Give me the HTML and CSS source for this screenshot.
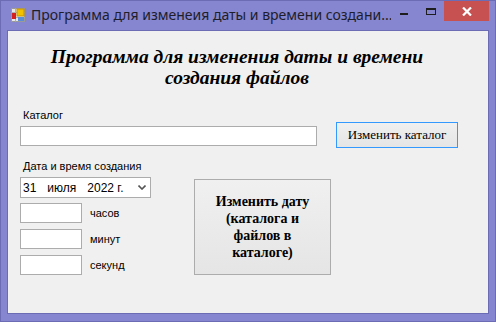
FILE: index.html
```html
<!DOCTYPE html>
<html lang="ru">
<head>
    <meta charset="UTF-8">
    <title>Программа для изменеия даты и времени создания файлов</title>
    <link rel="stylesheet" href="styles.css">
</head>
<body>
    <div class="window">
        <!-- Заголовок окна -->
        <div class="titlebar">
            <svg class="app-icon" viewBox="0 0 14 14">
                <rect x="0.5" y="0.5" width="13" height="13" fill="#e8e8e8" stroke="#9a9a9a"/>
                <line x1="0.5" y1="4.5" x2="13.5" y2="4.5" stroke="#b0b0b0"/>
                <line x1="0.5" y1="9.5" x2="13.5" y2="9.5" stroke="#b0b0b0"/>
                <line x1="4.5" y1="0.5" x2="4.5" y2="13.5" stroke="#b0b0b0"/>
                <rect x="6" y="1" width="7" height="7" fill="#f2c200" stroke="#c89400"/>
                <rect x="1" y="5" width="4" height="6" fill="#d42020"/>
                <rect x="7" y="9" width="6" height="4" fill="#5a8fd8"/>
            </svg>
            <span class="title">Программа для изменеия даты и времени создани...</span>
            <div class="controls">
                <div class="ctl ctl-min">
                    <svg viewBox="0 0 26 20">
                        <rect x="9" y="12" width="8" height="2" fill="#1e1e1e"/>
                    </svg>
                </div>
                <div class="ctl ctl-max">
                    <svg viewBox="0 0 27 20">
                        <rect x="9.5" y="7.5" width="9" height="6" fill="none" stroke="#1e1e1e"/>
                        <rect x="9" y="7" width="10" height="2" fill="#1e1e1e"/>
                    </svg>
                </div>
                <div class="ctl ctl-close">
                    <svg viewBox="0 0 10 9">
                        <path d="M1 0.5 L9 8.5 M9 0.5 L1 8.5" stroke="#fff" stroke-width="2.2"/>
                    </svg>
                </div>
            </div>
        </div>

        <!-- Клиентская область формы -->
        <div class="client">
            <h1 class="heading">Программа для изменения даты и времени<br>создания файлов</h1>

            <div class="row-catalog">
                <div class="field">
                    <label class="lbl">Каталог</label>
                    <input type="text" class="textbox textbox-wide">
                </div>
                <button class="btn btn-catalog">Изменить каталог</button>
            </div>

            <div class="row-date">
                <div class="date-col">
                    <label class="lbl">Дата и время создания</label>
                    <div class="datepicker">
                        <span class="dp-day">31</span>
                        <span class="dp-month">июля</span>
                        <span class="dp-year">2022 г.</span>
                        <svg class="dp-arrow" viewBox="0 0 8 5">
                            <path d="M0.5 0.5 L4 4 L7.5 0.5" fill="none" stroke="#555" stroke-width="1.6"/>
                        </svg>
                    </div>
                    <div class="time-row"><input type="text" class="textbox textbox-small"><span>часов</span></div>
                    <div class="time-row"><input type="text" class="textbox textbox-small"><span>минут</span></div>
                    <div class="time-row"><input type="text" class="textbox textbox-small"><span>секунд</span></div>
                </div>
                <button class="btn btn-big">Изменить дату<br>(каталога и<br>файлов в<br>каталоге)</button>
            </div>
        </div>
    </div>
</body>
</html>
```

FILE: styles.css
```css
body {
    margin: 0;
    padding: 0;
    font-family: 'Liberation Sans', Arial, sans-serif;
}

.window {
    width: 496px;
    height: 322px;
    box-sizing: border-box;
    background-color: #8585d0;
    border: 1px solid #6c6cb4;
    padding: 0 6px 7px 6px;
    display: flex;
    flex-direction: column;
}

/* Title bar */
.titlebar {
    height: 29px;
    display: flex;
    align-items: flex-start;
    margin-right: -6px;
}

.app-icon {
    flex-shrink: 0;
    width: 14px;
    height: 14px;
    margin: 7px 0 0 4px;
}

.title {
    flex: 1;
    min-width: 0;
    overflow: hidden;
    margin: 4px 0 0 6px;
    font-family: 'Noto Sans', sans-serif;
    font-size: 14px;
    color: #1e1e2a;
    white-space: nowrap;
}

.controls {
    flex-shrink: 0;
    display: flex;
    margin-right: 6px;
}

.ctl {
    height: 20px;
}

.ctl svg {
    display: block;
    width: 100%;
    height: 100%;
}

.ctl-min {
    width: 26px;
}

.ctl-max {
    width: 27px;
}

.ctl-close {
    width: 45px;
    background-color: #c75050;
    display: flex;
    align-items: center;
    justify-content: center;
}

.ctl-close svg {
    width: 10px;
    height: 9px;
}

/* Client area */
.client {
    flex: 1;
    background-color: #f0f0f0;
    border: 1px solid #6c6cb4;
    padding: 0 0 0 12px;
}

.heading {
    margin: 15px 0 0 0;
    width: 434px;
    text-align: center;
    font-family: 'Liberation Serif', 'Times New Roman', serif;
    font-style: italic;
    font-weight: bold;
    font-size: 19.5px;
    line-height: 21px;
    color: #000;
}

.lbl {
    display: block;
    margin-left: 3px;
    font-size: 11px;
    line-height: 13px;
    color: #000;
}

.row-catalog {
    display: flex;
    align-items: flex-start;
    margin-top: 21px;
}

.field .lbl {
    margin-bottom: 4px;
}

.textbox {
    display: block;
    box-sizing: border-box;
    height: 20px;
    margin: 0;
    border: 1px solid #acacac;
    background: #fff;
    outline: none;
}

.textbox-wide {
    width: 297px;
}

.textbox-small {
    width: 62px;
}

.btn {
    margin: 0;
    padding: 0;
    box-sizing: border-box;
    background: linear-gradient(#f0f0f0, #e5e5e5);
    border: 1px solid #acacac;
    font-family: 'Liberation Serif', 'Times New Roman', serif;
    color: #000;
}

.btn-catalog {
    width: 122px;
    height: 26px;
    margin: 13px 0 0 19px;
    border-color: #3399ff;
    font-size: 13px;
}

.row-date {
    display: flex;
    align-items: flex-start;
    margin-top: 12px;
}

.date-col {
    width: 131px;
}

.date-col .lbl {
    margin-bottom: 4px;
}

.datepicker {
    box-sizing: border-box;
    height: 21px;
    border: 1px solid #acacac;
    background: #fff;
    display: flex;
    align-items: center;
    font-size: 12px;
    color: #000;
}

.dp-day {
    margin-left: 2px;
}

.dp-month {
    margin-left: 11px;
}

.dp-year {
    margin-left: 11px;
}

.dp-arrow {
    width: 8px;
    height: 5px;
    margin-left: auto;
    margin-right: 4px;
}

.time-row {
    display: flex;
    align-items: center;
    margin-top: 6px;
    font-size: 11px;
}

.datepicker + .time-row {
    margin-top: 5px;
}

.time-row span {
    margin-left: 8px;
}

.btn-big {
    width: 137px;
    height: 96px;
    margin: 19px 0 0 43px;
    font-weight: bold;
    font-size: 14px;
    line-height: 17px;
}
```
